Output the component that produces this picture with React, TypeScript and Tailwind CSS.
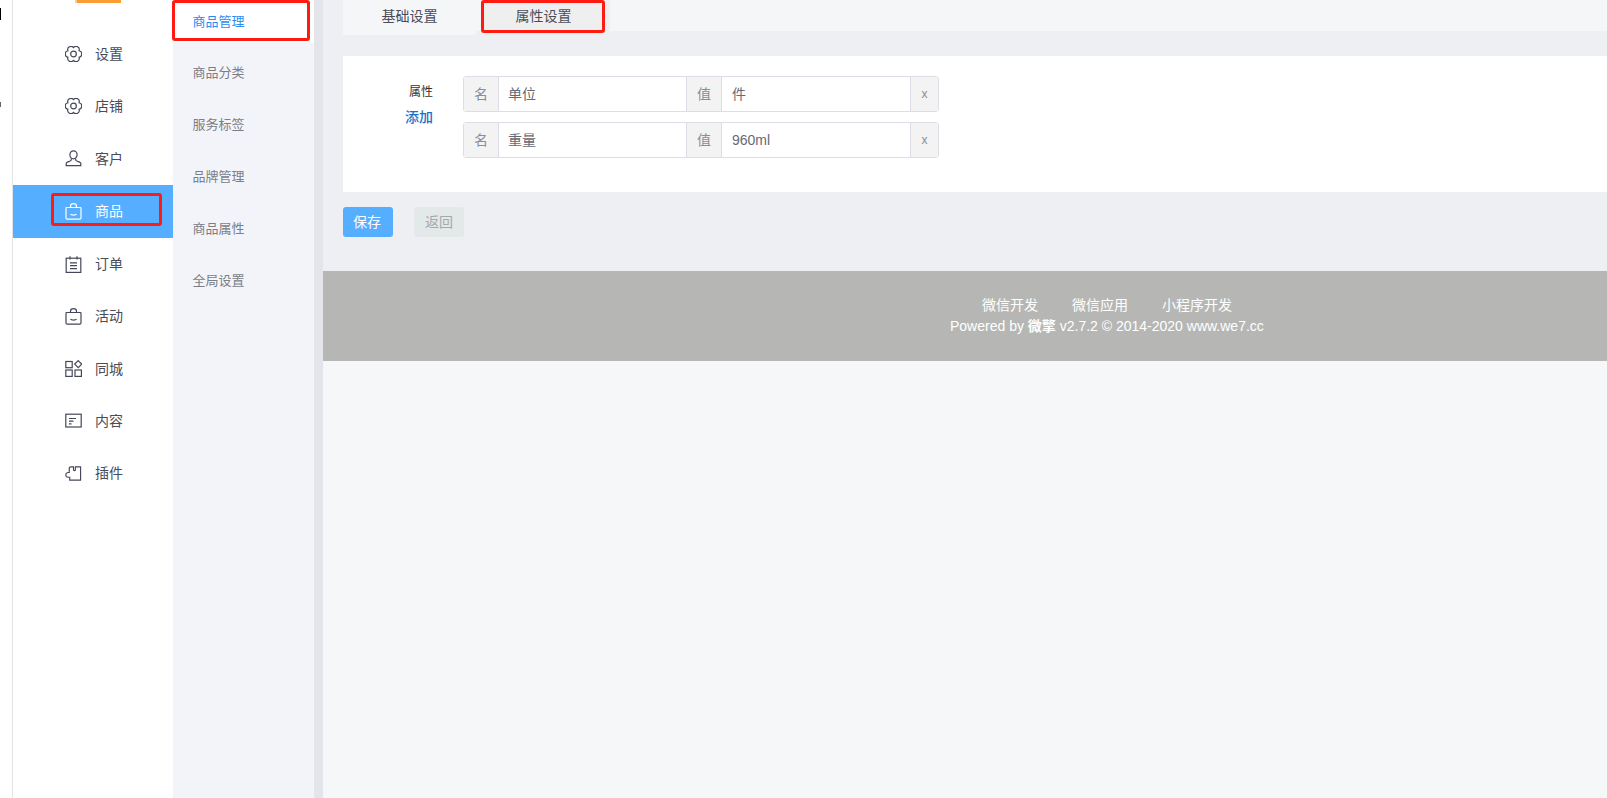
import React from "react";

const stroke = "#44475a";

const GearIcon = ({ color = stroke }: { color?: string }) => (
  <svg width="17" height="16" viewBox="1 1.500 15 14" fill="none" stroke={color} strokeWidth="1.050">
    <path d="M13.440 5.650A2.900 2.900 0 0 0 8.500 2.800 2.900 2.900 0 0 0 3.560 5.650 2.900 2.900 0 0 0 3.560 11.350 2.900 2.900 0 0 0 8.500 14.200 2.900 2.900 0 0 0 13.440 11.350 2.900 2.900 0 0 0 13.440 5.650z" />
    <circle cx="8.500" cy="8.500" r="2.500" />
  </svg>
);

const UserIcon = () => (
  <svg width="17" height="17" viewBox="0 0 17 17" fill="none" stroke={stroke} strokeWidth="1.2">
    <ellipse cx="8.500" cy="4.800" rx="3.600" ry="4" />
    <path d="M6.300 8.500v1.200c0 .8-.6 1.200-1.800 1.600-1.800.5-3.300 1-3.300 2.300v2h14.600v-2c0-1.300-1.500-1.800-3.300-2.300-1.200-.4-1.800-.8-1.800-1.600V8.500" />
  </svg>
);

const BagIcon = ({ color = stroke }: { color?: string }) => (
  <svg width="17" height="17" viewBox="0 0 17 17" fill="none" stroke={color} strokeWidth="1.2">
    <path d="M1.500 4.500h14a.5.5 0 0 1 .5.500v10a1.200 1.200 0 0 1-1.200 1.200H2.200A1.200 1.200 0 0 1 1 15V5a.5.5 0 0 1 .5-.5z" />
    <path d="M5.500 4.500V3.200a3 2.500 0 0 1 6 0v1.300" />
    <path d="M5.500 11c.8 1.500 5.200 1.500 6 0" />
  </svg>
);

const CalendarIcon = () => (
  <svg width="17" height="17" viewBox="0 0 17 17" fill="none" stroke={stroke} strokeWidth="1.2">
    <rect x="1.200" y="2.200" width="14.600" height="14.200" />
    <path d="M5 .2v3.400M12 .2v3.400M5 6.800h7M5 9.700h7M5 12.600h7" />
  </svg>
);

const AppsIcon = () => (
  <svg width="17" height="17" viewBox="0 0 17 17" fill="none" stroke={stroke} strokeWidth="1.2">
    <rect x=".8" y="1.500" width="6.400" height="6.200" />
    <rect x=".8" y="10" width="6.400" height="6.400" />
    <rect x="10" y="10" width="6.400" height="6.400" />
    <path d="M13.200 .6l3.500 3.500-3.500 3.500-3.500-3.500z" />
  </svg>
);

const CardIcon = () => (
  <svg width="17" height="17" viewBox="0 0 17 17" fill="none" stroke={stroke} strokeWidth="1.2">
    <rect x=".8" y="2.200" width="15.400" height="12.800" />
    <path d="M4 6.500h7M4 9.200h4.500M4 11.800h2.500" />
  </svg>
);

const PuzzleIcon = () => (
  <svg width="18" height="17" viewBox="0 0 18 17" fill="none" stroke={stroke} strokeWidth="1.2">
    <path d="M4.500 3.200Q4.500 1.500 6.500 1.500H9V5Q10 6 11 5V1.500H16.500V15.500H5V12.500H3Q.8 12 .8 10 .8 8 3 7.500H4.500z" />
  </svg>
);

const mainMenu = [
  { label: "设置", icon: <GearIcon /> },
  { label: "店铺", icon: <GearIcon /> },
  { label: "客户", icon: <UserIcon /> },
  { label: "商品", icon: <BagIcon color="#ffffff" />, active: true },
  { label: "订单", icon: <CalendarIcon /> },
  { label: "活动", icon: <BagIcon /> },
  { label: "同城", icon: <AppsIcon /> },
  { label: "内容", icon: <CardIcon /> },
  { label: "插件", icon: <PuzzleIcon /> },
];

const subMenu = ["商品管理", "商品分类", "服务标签", "品牌管理", "商品属性", "全局设置"];

const attrs = [
  { name: "单位", value: "件" },
  { name: "重量", value: "960ml" },
];

const AttrRow = ({ name, value }: { name: string; value: string }) => (
  <div className="flex h-9 w-[476px] rounded-[3px] border border-[#dcdee6] text-sm text-[#666a75]">
    <div className="flex w-[35px] items-center justify-center border-r border-[#dcdee6] bg-[#f3f3f4] text-[#8a8d95]">名</div>
    <div className="flex w-[187px] items-center pl-[9px]">{name}</div>
    <div className="flex w-[36px] items-center justify-center border-x border-[#dcdee6] bg-[#f3f3f4] text-[#8a8d95]">值</div>
    <div className="flex w-[188px] items-center pl-[10px]">{value}</div>
    <div className="flex flex-1 items-center justify-center border-l border-[#dcdee6] bg-[#f3f3f4] text-xs text-[#8a8d95]">x</div>
  </div>
);

export default function App() {
  return (
    <div className="relative flex h-[798px] w-[1607px] overflow-hidden bg-white font-['Liberation_Sans','Noto_Sans_CJK_SC',sans-serif]">
      {/* cropped window edge */}
      <div className="relative w-[13px] shrink-0 border-r border-[#e3e3e3]">
        <div className="absolute left-0 top-[8px] h-[12px] w-[1px] bg-black" />
        <div className="absolute left-0 top-[102px] h-[5px] w-[1px] bg-[#666666]" />
      </div>

      <aside className="relative flex w-[160px] shrink-0 flex-col pt-[28px]">
        <div className="absolute left-[62px] top-0 h-[3px] w-[46px] border-l-2 border-[#ffc98f] bg-[#fb9d35]" />
        {mainMenu.map((item) => (
          <div
            key={item.label}
            className={`flex items-center gap-[13px] pl-[52px] text-sm ${item.active ? "h-[53px] bg-[#55aeff] text-white" : "h-[52.3px] text-[#4a4c57]"}`}
          >
            <span className="flex w-[17px] justify-center">{item.icon}</span>
            <span>{item.label}</span>
          </div>
        ))}
        <div className="absolute left-[38px] top-[193px] h-[33px] w-[111px] rounded-[3px] border-[3px] border-[#ff1a12]" />
      </aside>

      <nav className="relative flex w-[141px] shrink-0 flex-col bg-[#f3f4f9]">
        {subMenu.map((label, i) => (
          <div
            key={label}
            className={`flex items-center pl-[19.5px] text-[13px] ${i === 0 ? "h-[43px] bg-white text-[#2d8cf0]" : "h-[52px] text-[#7b7e87]"} ${i === 1 ? "mt-[4px]" : ""}`}
          >
            {label}
          </div>
        ))}
        <div className="absolute left-[-1px] top-0 h-[41px] w-[138px] rounded-[3px] border-[3px] border-[#ff1a12]" />
      </nav>

      <div className="w-[9px] shrink-0 bg-[#e4e5ea]" />

      <main className="relative flex min-w-0 flex-1 flex-col bg-[#f6f7f9]">
        <div className="h-[271px] bg-[#eeeff3] pl-5">
          <div className="flex h-[31px] items-start bg-[#f5f6f8] text-sm text-[#4a4c57]">
            <div className="flex h-[35px] w-[133px] items-center justify-center bg-[#f5f6f8] pb-[4px]">基础设置</div>
            <div className="ml-[5px] flex h-[35px] w-[129px] items-center justify-center bg-[#efefef] pb-[4px] pr-[4px]">属性设置</div>
          </div>

          <section className="mt-[25px] flex h-[136px] bg-white pt-5">
            <div className="flex w-[90px] flex-col items-end pt-[7px]">
              <span className="text-xs leading-[18px] text-[#333333]">属性</span>
              <span className="mt-[7px] text-sm font-medium leading-[18px] text-[#1a6fc9]">添加</span>
            </div>
            <div className="ml-[30px] flex flex-col gap-[10px]">
              {attrs.map((attr) => (
                <AttrRow key={attr.name} name={attr.name} value={attr.value} />
              ))}
            </div>
          </section>

          <div className="mt-[15px] flex gap-[21px] text-sm">
            <button className="h-[30px] w-[50px] rounded-[3px] bg-[#55aeff] pr-[2px] text-white">保存</button>
            <button className="h-[30px] w-[50px] rounded-[3px] bg-[#e3e8e9] text-[#a3a8aa]">返回</button>
          </div>
        </div>

        <footer className="h-[90px] bg-[#b6b7b5] pl-[627px] pt-[24px] text-sm text-white">
          <div className="inline-flex flex-col items-center">
            <div className="flex gap-[34px] text-[14px] leading-5">
              <span>微信开发</span>
              <span>微信应用</span>
              <span>小程序开发</span>
            </div>
            <div className="mt-[1px] leading-5">Powered by <span className="font-bold">微擎</span> v2.7.2 © 2014-2020 www.we7.cc</div>
          </div>
        </footer>

        <div className="absolute left-[158px] top-0 h-[33px] w-[124px] rounded-[3px] border-[3px] border-[#ff1a12]" />
      </main>
    </div>
  );
}
